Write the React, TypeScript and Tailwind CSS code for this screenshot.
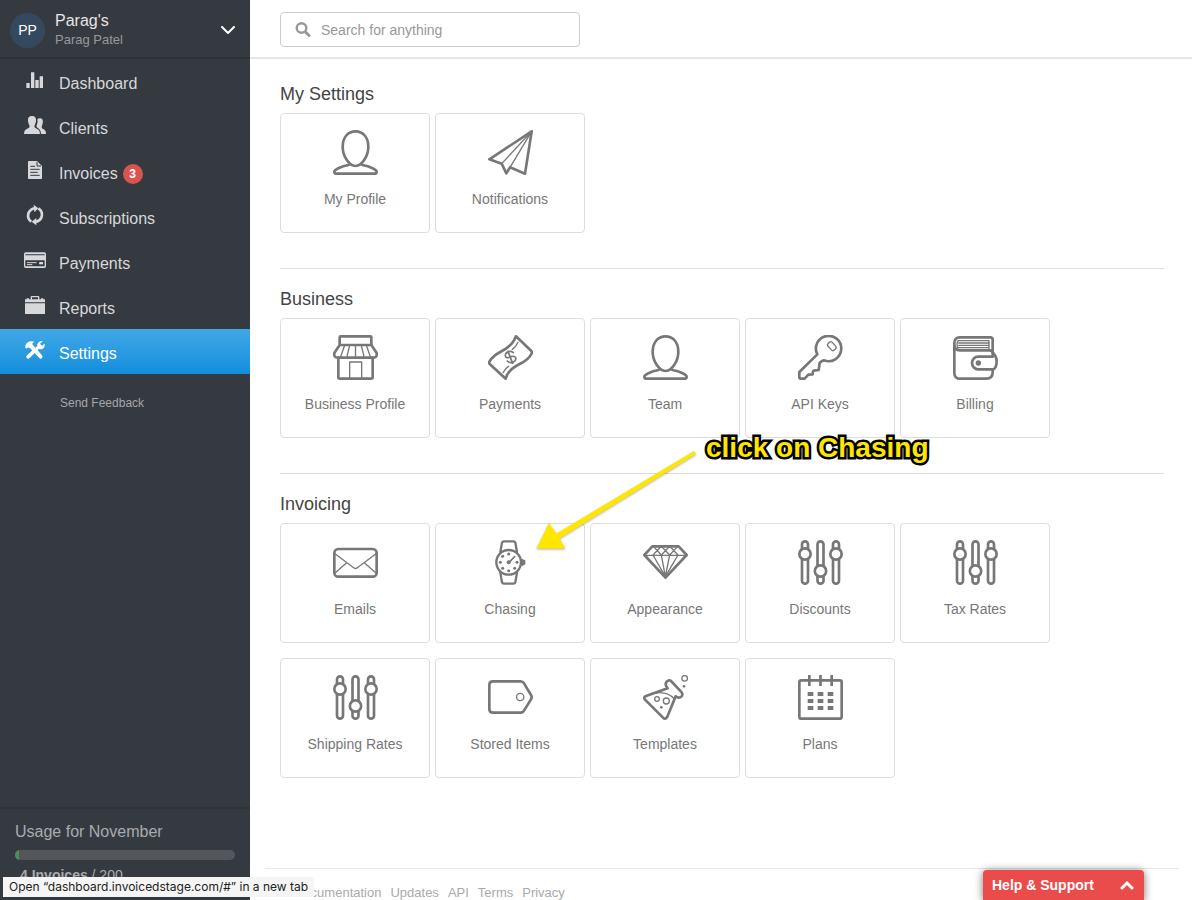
import type { ReactNode } from "react";

const thin = { strokeWidth: 4 };

function ProfileIcon() {
  return (
    <>
      <path d="M67.5 4C90 4 106 22 106 50C106 78 87 108 67.5 108C48 108 29 78 29 50C29 22 45 4 67.5 4Z" />
      <path d="M47 105C22 109 4 120 4 125Q4 131 11 131H124Q131 131 131 125C131 120 113 109 88 105" />
    </>
  );
}

function PlaneIcon() {
  return (
    <>
      <path d="M131 4L4 88L41 101L55 130L66 112L111 131Z" />
      <path {...thin} d="M131 4L41 101M131 4L66 112" />
    </>
  );
}

function StoreIcon() {
  return (
    <>
      <rect x="20" y="4" width="95" height="26" rx="3" />
      <path d="M20 30L4 54Q2 68 14 68H121Q133 68 131 54L115 30" />
      <path d="M16 68V127Q16 131 21 131H114Q119 131 119 127V68" />
      <path {...thin} d="M35 31L23 65M50 31L42 65M67.500 31V65M85 31L93 65M100 31L112 65M50 130V81H86V130" />
    </>
  );
}

function MoneyIcon() {
  return (
    <>
      <path d="M84 4L130 48Q133 52 130 57C114 90 80 82 58 118L53 131L5 87Q2 83 5 79C22 47 58 52 78 16Z" />
      <path {...thin} d="M73 43Q84 36 90 22M45 113Q51 100 62 94" />
      <path strokeWidth="5" d="M76 53C68 46 54 50 52 59C51 73 64 67 72 64C83 62 86 70 81 77C76 84 65 85 58 78M60 49L74 85" />
    </>
  );
}

function KeyIcon() {
  return (
    <>
      <path d="M58 58A38 38 0 1 1 78 76Q62 80 64 92L62 105L47 107Q44 108 44 118L31 119L20 131H8Q4 131 4 126V111Z" />
      <rect {...thin} x="93" y="20" width="17" height="27" rx="6" transform="rotate(-42 101.500 33.500)" />
    </>
  );
}

function WalletIcon() {
  return (
    <>
      <path d="M4 25V113Q4 131 22 131H100Q119 131 119 112V104M4 26Q4 7 20 7H112Q119 7 119 14V62M4 28Q5 46 20 46H109Q119 46 121 55" />
      <path d="M119 65H76A19 19 0 0 0 76 103H119C126 103 131 93 131 79C131 68 127 60 119 53" />
      <path {...thin} d="M15 40Q9 28 15 17H108V44M17 24H106M17 31H106M17 38H106" />
      <circle cx="76" cy="84" r="8" fill="currentColor" stroke="none" />
    </>
  );
}

function MailIcon() {
  return (
    <>
      <rect x="4" y="27" width="127" height="83" rx="12" />
      <path {...thin} d="M7 42L60 82Q67.500 89 75 82L128 42M7 98L40 69M128 98L95 69" />
    </>
  );
}

function WatchIcon() {
  return (
    <>
      <circle cx="62" cy="67" r="37" strokeWidth="7" />
      <path strokeWidth="7" d="M37 36L42 8Q43 4 48 4H76Q81 4 82 8L87 36M37 98L42 127Q43 131 48 131H76Q81 131 82 127L87 98" />
      <path fill="currentColor" stroke="none" d="M101 56L112 61V73L101 79Z" />
      <path strokeWidth="5" d="M63 67L80 50" />
      <g fill="currentColor" stroke="none">
        <circle cx="62" cy="67" r="6" />
        <circle cx="62" cy="42" r="4.500" />
        <circle cx="62" cy="92" r="4.500" />
        <circle cx="37" cy="67" r="4.500" />
        <circle cx="87" cy="67" r="4.500" />
        <circle cx="44" cy="49" r="4.500" />
        <circle cx="44" cy="85" r="4.500" />
        <circle cx="80" cy="85" r="4.500" />
      </g>
    </>
  );
}

function DiamondIcon() {
  return (
    <>
      <path d="M28 19H107L131 45L67.500 113L4 45Z" />
      <path {...thin} d="M4 46H131M31 19L55 45L80 19L105 45M104 19L80 45L55 19L30 45M30 45L67 110L55 45M105 45L67 110L80 45" />
    </>
  );
}

function SlidersIcon() {
  return (
    <>
      <rect x="12" y="4" width="18" height="127" rx="9" />
      <rect x="58.500" y="4" width="18" height="127" rx="9" />
      <rect x="105" y="4" width="18" height="127" rx="9" />
      <circle cx="21" cy="42" r="17" fill="white" />
      <circle cx="67.500" cy="93" r="17" fill="white" />
      <circle cx="114" cy="42" r="17" fill="white" />
    </>
  );
}

function TagIcon() {
  return (
    <>
      <path d="M15 19H98Q104 19 108 25L129 60Q133 67 129 73L108 107Q104 113 98 113H15Q4 113 4 102V30Q4 19 15 19Z" />
      <circle {...thin} cx="96.500" cy="66" r="11" />
    </>
  );
}

function FlaskIcon() {
  return (
    <>
      <path d="M74 40L9 63Q0 67 6 74L60 128Q68 135 73 125L98 64Q108 72 116 64Q121 57 114 50L87 21Q79 12 71 20Q64 29 74 40Z" />
      <path {...thin} d="M38 54C60 51 82 58 94 72" />
      <circle {...thin} cx="42" cy="72" r="7" />
      <circle {...thin} cx="70" cy="78" r="9" />
      <circle {...thin} cx="125" cy="10" r="8.500" />
      <circle cx="55" cy="97" r="4" fill="currentColor" stroke="none" />
      <circle cx="123" cy="34" r="4" fill="currentColor" stroke="none" />
    </>
  );
}

function CalendarIcon() {
  return (
    <>
      <rect x="4" y="16" width="127" height="115" rx="6" />
      <path strokeWidth="8" strokeLinecap="butt" d="M34 0V33M67.500 0V33M101 0V33" />
      <path
        fill="currentColor"
        stroke="none"
        d="M29 51h17v12h-17zM59 51h17v12h-17zM89 51h17v12h-17zM29 72h17v12h-17zM59 72h17v12h-17zM89 72h17v12h-17zM29 93h17v12h-17zM59 93h17v12h-17zM89 93h17v12h-17z"
      />
    </>
  );
}

function Card({ label, icon }: { label: string; icon: ReactNode }) {
  return (
    <a
      href="#"
      className="flex h-[120px] w-[150px] flex-col items-center rounded border border-[#ddd] bg-white pt-4 text-[14px] leading-5 text-[#777]"
    >
      <svg
        viewBox="0 0 135 135"
        className="size-[45px]"
        fill="none"
        stroke="currentColor"
        strokeWidth="8"
        strokeLinecap="round"
        strokeLinejoin="round"
        aria-hidden="true"
      >
        {icon}
      </svg>
      <span className="mt-[14px]">{label}</span>
    </a>
  );
}

function Section({ title, items }: { title: string; items: [string, ReactNode][] }) {
  return (
    <section className="border-b border-[#ddd] pt-5 pb-[35px] last:border-b-0">
      <h2 className="text-[18px] leading-5 text-[#444]">{title}</h2>
      <div className="mt-[9px] flex flex-wrap gap-x-[5px] gap-y-[15px]">
        {items.map(([label, icon]) => (
          <Card key={label} label={label} icon={icon} />
        ))}
      </div>
    </section>
  );
}

const navItems: { label: string; badge?: string; active?: boolean; icon: ReactNode }[] = [
  {
    label: "Dashboard",
    icon: <path d="M7 42h10v15h-10zM21 10h10v47h-10zM34 33h10v24h-10zM47 22h10v35h-10z" />,
  },
  {
    label: "Clients",
    icon: (
      <>
        <path d="M24 6C33 6 37 12 36 20C35 29 32 33 31 36Q30 41 38 44Q48 47 48 60H0Q0 47 10 44Q18 41 17 36C16 33 13 29 12 20C11 12 15 6 24 6Z" />
        <path d="M40 16Q44 12 49 13C56 14 58 20 56 28C55 34 53 36 53 40Q53 44 59 46Q66 49 66 60H51Q51 46 40 41Q36 38 38 34C41 28 41 22 40 16Z" />
      </>
    ),
  },
  {
    label: "Invoices",
    badge: "3",
    icon: (
      <>
        <path d="M14 6H39L54 21V58Q54 60 52 60H14Q12 60 12 58V8Q12 6 14 6Z" />
        <path d="M39 9V21H51M19 22H33M19 31H47M19 40H41M19 49H47" fill="none" stroke="#353a40" strokeWidth="3" />
      </>
    ),
  },
  {
    label: "Subscriptions",
    icon: (
      <>
        <path d="M22 53C7 43 9 19 31 13M43 13C60 24 57 48 35 54" fill="none" stroke="currentColor" strokeWidth="8" />
        <path d="M29 2L43 13L31 25ZM37 42L23 53L37 64Z" />
      </>
    ),
  },
  {
    label: "Payments",
    icon: (
      <>
        <path fillRule="evenodd" d="M5 10H61Q66 10 66 15V52Q66 57 61 57H5Q0 57 0 52V15Q0 10 5 10ZM4 16V19H62V16ZM4 34V52H62V34Z" />
        <path d="M9 41H38M9 47H25M45 43H57" fill="none" stroke="currentColor" strokeWidth="3" />
        <path d="M46 39h11v7h-11z" />
      </>
    ),
  },
  {
    label: "Reports",
    icon: (
      <path d="M3 28H63V60H3ZM3 25V16H8V13H15V16H20V9Q20 6 23 6H43Q46 6 46 9V16H51V13H58V16H63V25ZM24 10V16H42V10Z" fillRule="evenodd" />
    ),
  },
  {
    label: "Settings",
    active: true,
    icon: (
      <>
        <path d="M3 25Q5 10 19 7Q26 6 32 8Q24 10 25 16L54 49Q58 53 54 57Q50 61 46 57L17 26Q12 24 8 29Z" />
        <path d="M46 8Q51 5 56 7L48 14L54 20L62 14Q64 25 56 29Q50 32 45 29L17 57Q12 61 8 57Q5 53 9 49L40 21Q38 13 46 8Z" />
      </>
    ),
  },
];

const sliders = <SlidersIcon />;

export default function App() {
  return (
    <div className="flex h-screen overflow-hidden bg-white font-['Liberation_Sans',Arial,sans-serif]">
      <aside className="flex w-[250px] shrink-0 flex-col bg-[#353a40] text-[#d8d8da]">
        <button type="button" className="flex h-[59px] items-center border-b-2 border-[#2f3237] pt-[3px] pr-[15px] pl-[10px] text-left">
          <span className="flex size-[35px] items-center justify-center rounded-full bg-[#34495e] text-[14px] text-white">PP</span>
          <span className="ml-[10px] flex flex-1 flex-col">
            <span className="text-[16px] leading-5 text-[#e6e6e6]">Parag's</span>
            <span className="text-[13px] leading-[18px] text-[#999]">Parag Patel</span>
          </span>
          <svg viewBox="0 0 14 9" className="h-[9px] w-[14px]" fill="none" stroke="white" strokeWidth="2" strokeLinecap="round" strokeLinejoin="round" aria-hidden="true">
            <path d="M1 1L7 7L13 1" />
          </svg>
        </button>
        <nav className="flex flex-col">
          {navItems.map((item) => (
            <a
              key={item.label}
              href="#"
              className={
                item.active
                  ? "flex h-[45px] items-start bg-linear-to-b from-[#3fa8e6] to-[#108edd] pt-[10px] pl-6 text-white"
                  : "flex h-[45px] items-start pt-[10px] pl-6"
              }
            >
              <svg viewBox="0 0 66 66" className="size-[22px]" fill="currentColor" aria-hidden="true">
                {item.icon}
              </svg>
              <span className="ml-[13px] flex items-center text-[16px] leading-[30px]">
                {item.label}
                {item.badge && (
                  <span className="ml-[5px] flex size-5 items-center justify-center rounded-full bg-[#d9534f] text-[12px] font-bold text-white">
                    {item.badge}
                  </span>
                )}
              </span>
            </a>
          ))}
        </nav>
        <a href="#" className="mt-[19px] pl-[60px] text-[12px] leading-5 text-[#a5a6a8]">
          Send Feedback
        </a>
        <div className="mt-auto h-[93px] overflow-hidden border-t-2 border-[#2f3237] px-[15px] pt-3">
          <h3 className="text-[16px] leading-[22px] text-[#a9abad]">Usage for November</h3>
          <div className="mt-[7px] h-[10px] overflow-hidden rounded-full bg-[#53575c]">
            <div className="h-full w-[2%] bg-[#4f8f55]" />
          </div>
          <p className="mt-[5px] pl-[5px] text-[14px] leading-5 text-[#a9abad]">
            <strong>4 Invoices</strong> / 200
          </p>
        </div>
      </aside>

      <div className="relative flex min-w-0 flex-1 flex-col">
        <header className="flex h-[59px] shrink-0 items-center border-b-2 border-[#e5e5e5] px-[30px] pt-0.5">
          <label className="flex h-[35px] w-[300px] items-center rounded border border-[#ccc] px-[14px]">
            <svg viewBox="0 0 16 16" className="size-4" fill="none" stroke="#999" aria-hidden="true">
              <circle cx="6.500" cy="6" r="4.800" strokeWidth="2.400" />
              <path d="M10.500 10L14 13.500" strokeWidth="3" strokeLinecap="round" />
            </svg>
            <input
              type="search"
              aria-label="Search for anything"
              placeholder="Search for anything"
              className="ml-[10px] min-w-0 flex-1 text-[14px] leading-5 outline-none placeholder:text-[#999]"
            />
          </label>
        </header>

        <main className="min-h-0 flex-1 pt-[5px] pr-7 pl-[30px]">
          <Section
            title="My Settings"
            items={[
              ["My Profile", <ProfileIcon />],
              ["Notifications", <PlaneIcon />],
            ]}
          />
          <Section
            title="Business"
            items={[
              ["Business Profile", <StoreIcon />],
              ["Payments", <MoneyIcon />],
              ["Team", <ProfileIcon />],
              ["API Keys", <KeyIcon />],
              ["Billing", <WalletIcon />],
            ]}
          />
          <Section
            title="Invoicing"
            items={[
              ["Emails", <MailIcon />],
              ["Chasing", <WatchIcon />],
              ["Appearance", <DiamondIcon />],
              ["Discounts", sliders],
              ["Tax Rates", sliders],
              ["Shipping Rates", sliders],
              ["Stored Items", <TagIcon />],
              ["Templates", <FlaskIcon />],
              ["Plans", <CalendarIcon />],
            ]}
          />
        </main>

        <footer className="mr-[13px] ml-[15px] flex h-8 shrink-0 gap-[9px] border-t border-[#e8e8e8] pt-[14px] pl-[29px] text-[13px] leading-5 text-[#aaa]">
          <a href="#">Documentation</a>
          <a href="#">Updates</a>
          <a href="#">API</a>
          <a href="#">Terms</a>
          <a href="#">Privacy</a>
        </footer>

        <div className="pointer-events-none absolute top-[434px] left-[286px] flex items-start">
          <svg viewBox="0 0 162 120" className="mt-4 h-[120px] w-[162px] drop-shadow-[0_1px_1px_rgba(0,0,0,0.3)]" fill="#ffe600" aria-hidden="true">
            <path d="M158 1L160 4L23.500 88.500L29.500 98.500H0.500L13 73L20.500 83.500Z" />
          </svg>
          <span className="ml-2 text-[28px] leading-7 font-bold whitespace-nowrap text-[#ffe600] [-webkit-text-stroke:5px_black] [paint-order:stroke_fill] [stroke-linejoin:round]">
            click on Chasing
          </span>
        </div>

        <button
          type="button"
          className="absolute right-12 bottom-0 flex h-[30px] w-[161px] items-center justify-between rounded-t bg-[#ea4b4b] pr-[10px] pl-[9px] text-[14px] font-bold text-white shadow-[0_1px_8px_rgba(0,0,0,0.55)]"
        >
          Help &amp; Support
          <svg viewBox="0 0 14 10" className="h-[10px] w-[14px]" fill="none" stroke="white" strokeWidth="3" strokeLinecap="round" aria-hidden="true">
            <path d="M2 8L7 3L12 8" />
          </svg>
        </button>
      </div>

      <div role="tooltip" className="absolute bottom-[3px] left-[3px] h-5 bg-[#f5f5f5] px-[6px] font-['Inter',sans-serif] text-[12px] leading-5 whitespace-nowrap text-[#222]">
        Open “dashboard.invoicedstage.com/#” in a new tab
      </div>
    </div>
  );
}
